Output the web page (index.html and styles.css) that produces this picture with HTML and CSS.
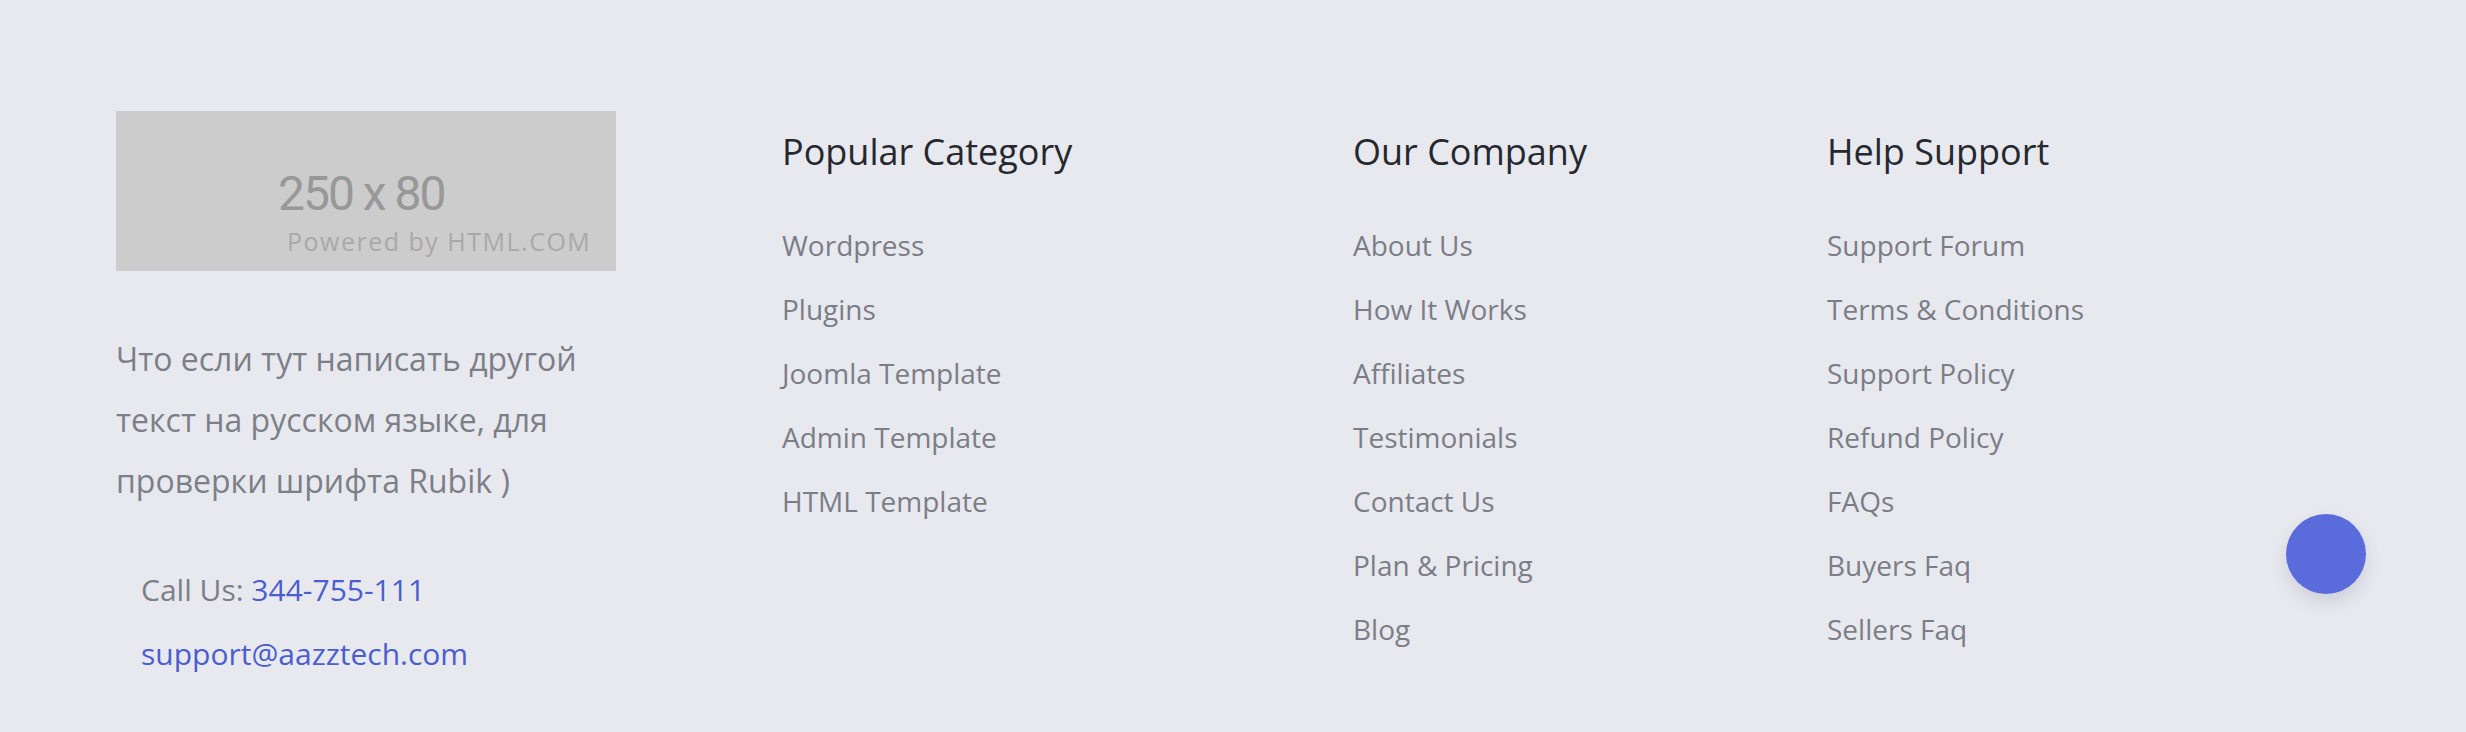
FILE: index.html
```html
<!DOCTYPE html>
<html lang="ru">
<head>
    <meta charset="UTF-8">
    <meta name="viewport" content="width=device-width, initial-scale=1.0">
    <title>Footer</title>
    <link rel="stylesheet" href="styles.css">
</head>
<body>
    <footer class="footer">
        <div class="footer-inner">
            <div class="footer-about">
                <div class="logo-placeholder">
                    <span class="logo-size">250 x 80</span>
                    <span class="logo-credit">Powered by HTML.COM</span>
                </div>
                <p class="about-text">Что если тут написать другой текст на русском языке, для проверки шрифта Rubik )</p>
                <ul class="contact-list">
                    <li>Call Us: <a href="#">344-755-111</a></li>
                    <li><a href="#">support@aazztech.com</a></li>
                </ul>
            </div>

            <div class="footer-col">
                <h4>Popular Category</h4>
                <ul class="footer-links">
                    <li><a href="#">Wordpress</a></li>
                    <li><a href="#">Plugins</a></li>
                    <li><a href="#">Joomla Template</a></li>
                    <li><a href="#">Admin Template</a></li>
                    <li><a href="#">HTML Template</a></li>
                </ul>
            </div>

            <div class="footer-col">
                <h4>Our Company</h4>
                <ul class="footer-links">
                    <li><a href="#">About Us</a></li>
                    <li><a href="#">How It Works</a></li>
                    <li><a href="#">Affiliates</a></li>
                    <li><a href="#">Testimonials</a></li>
                    <li><a href="#">Contact Us</a></li>
                    <li><a href="#">Plan &amp; Pricing</a></li>
                    <li><a href="#">Blog</a></li>
                </ul>
            </div>

            <div class="footer-col">
                <h4>Help Support</h4>
                <ul class="footer-links">
                    <li><a href="#">Support Forum</a></li>
                    <li><a href="#">Terms &amp; Conditions</a></li>
                    <li><a href="#">Support Policy</a></li>
                    <li><a href="#">Refund Policy</a></li>
                    <li><a href="#">FAQs</a></li>
                    <li><a href="#">Buyers Faq</a></li>
                    <li><a href="#">Sellers Faq</a></li>
                </ul>
            </div>
        </div>

        <!-- scroll to top -->
        <a class="back-to-top" href="#"></a>
    </footer>
</body>
</html>
```

FILE: styles.css
```css
body {
    margin: 0;
    background-color: #e8e9ee;
    font-family: "Open Sans", Arial, sans-serif;
}

.footer {
    height: 732px;
    box-sizing: border-box;
    padding: 111px 0 0 116px;
    overflow: hidden;
}

.footer-inner {
    display: grid;
    grid-template-columns: 666px 571px 474px 1fr;
}

/* logo + about */
.logo-placeholder {
    width: 500px;
    height: 160px;
    box-sizing: border-box;
    padding: 59px 0 0 162px;
    background-color: #cccccc;
    display: flex;
    flex-direction: column;
}

.logo-size {
    font-family: Roboto, Arial, sans-serif;
    font-size: 48px;
    line-height: 48px;
    letter-spacing: -2px;
    color: #989898;
}

.logo-credit {
    margin: 8px 0 0 9px;
    font-size: 25px;
    line-height: 30px;
    letter-spacing: 1.5px;
    color: #a9a9a9;
}

.about-text {
    max-width: 500px;
    margin: 57px 0 0;
    font-size: 32px;
    line-height: 61px;
    color: #7d7f88;
}

.contact-list {
    list-style: none;
    margin: 47px 0 0;
    padding-left: 25px;
}

.contact-list li {
    font-size: 30px;
    line-height: 64px;
    color: #7d7f88;
}

.contact-list a {
    color: #4b5dcf;
    text-decoration: none;
}

/* link columns */
.footer-col {
    padding-top: 19px;
}

.footer-col h4 {
    margin: 0 0 39px;
    font-size: 36px;
    line-height: 44px;
    font-weight: 400;
    color: #25282e;
}

.footer-links {
    list-style: none;
    margin: 0;
    padding: 0;
}

.footer-links li {
    font-size: 28px;
    line-height: 64px;
}

.footer-links a {
    color: #7b7d87;
    text-decoration: none;
}

.back-to-top {
    position: fixed;
    right: 100px;
    top: 514px;
    width: 80px;
    height: 80px;
    border-radius: 50%;
    background-color: #5a6bdc;
    box-shadow: 0 8px 16px rgba(60, 70, 120, 0.15);
}
```
